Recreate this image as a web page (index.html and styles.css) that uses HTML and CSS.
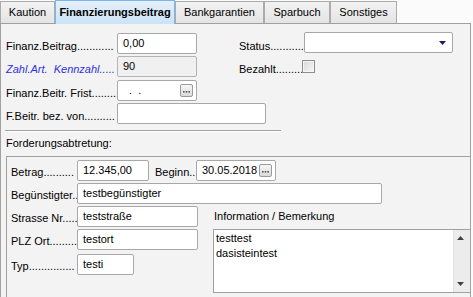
FILE: index.html
```html
<!DOCTYPE html>
<html>
<head>
<meta charset="utf-8">
<link rel="stylesheet" href="styles.css">
</head>
<body>
<div class="tabs">
  <div class="tab w1">Kaution</div>
  <div class="tab active w2">Finanzierungsbeitrag</div>
  <div class="tab w3">Bankgarantien</div>
  <div class="tab w4">Sparbuch</div>
  <div class="tab w5">Sonstiges</div>
</div>
<div class="panel">
  <div class="top">
    <div class="lbl">Finanz.Beitrag............</div>
    <div class="inp w80"><span>0,00</span></div>
    <div class="lbl">Status...........</div>
    <div class="sel"><svg width="7" height="4" viewBox="0 0 7 4"><path d="M0 0H7L3.5 4Z" fill="#1c1c5e"/></svg></div>

    <div class="lbl blue">Zahl.Art.&nbsp; Kennzahl.....</div>
    <div class="inp w80 dis"><span>90</span></div>
    <div class="chkrow"><span class="lbl">Bezahlt.........</span><span class="chk"></span></div>

    <div class="lbl">Finanz.Beitr. Frist.........</div>
    <div class="inp w80 date"><span>&nbsp;&nbsp;.&nbsp;&nbsp;.</span><span class="btn"><svg width="7" height="2" viewBox="0 0 7 2"><rect x="0" y="0" width="1.6" height="1.6" fill="#555"/><rect x="2.7" y="0" width="1.6" height="1.6" fill="#555"/><rect x="5.4" y="0" width="1.6" height="1.6" fill="#555"/></svg></span></div>

    <div class="lbl first">F.Beitr. bez. von..........</div>
    <div class="inp wide"></div>
  </div>
  <div class="sep"></div>
  <div class="caption">Forderungsabtretung:</div>
  <div class="group">
    <div class="grow">
      <div class="glbl">Betrag..........</div>
      <div class="inp w72"><span>12.345,00</span></div>
      <div class="glbl beg">Beginn..</div>
      <div class="inp w80 date"><span>30.05.2018</span><span class="btn"><svg width="7" height="2" viewBox="0 0 7 2"><rect x="0" y="0" width="1.6" height="1.6" fill="#555"/><rect x="2.7" y="0" width="1.6" height="1.6" fill="#555"/><rect x="5.4" y="0" width="1.6" height="1.6" fill="#555"/></svg></span></div>
    </div>
    <div class="grow">
      <div class="glbl">Begünstigter..</div>
      <div class="inp w305"><span>testbegünstigter</span></div>
    </div>
    <div class="split">
      <div class="left">
        <div class="grow">
          <div class="glbl">Strasse Nr.....</div>
          <div class="inp w121"><span>teststraße</span></div>
        </div>
        <div class="grow">
          <div class="glbl">PLZ Ort.........</div>
          <div class="inp w121"><span>testort</span></div>
        </div>
        <div class="grow typ">
          <div class="glbl">Typ...............</div>
          <div class="inp w57"><span>testi</span></div>
        </div>
      </div>
      <div class="right">
        <div class="infolbl">Information / Bemerkung</div>
        <div class="ta">
          <div class="ta-text">testtest<br>dasisteintest</div>
          <div class="ta-scroll">
            <svg width="7" height="4" viewBox="0 0 7 4"><path d="M0 4H7L3.5 0Z" fill="#404040"/></svg>
            <svg width="7" height="4" viewBox="0 0 7 4"><path d="M0 0H7L3.5 4Z" fill="#404040"/></svg>
          </div>
        </div>
      </div>
    </div>
  </div>
</div>
</body>
</html>
```
FILE: styles.css
```css
* { box-sizing: border-box; }
html, body { margin: 0; padding: 0; }
body {
  width: 473px;
  height: 297px;
  overflow: hidden;
  background: #fbfbfb;
  font-family: "Liberation Sans", Arial, sans-serif;
  font-size: 11px;
  color: #000;
}
.tabs {
  display: flex;
  align-items: flex-end;
  height: 23px;
  position: relative;
  z-index: 1;
}
.tab {
  height: 22px;
  border: 1px solid #acacac;
  border-bottom: none;
  background: linear-gradient(#f2f2f2, #e4e4e4);
  text-align: center;
  line-height: 21px;
  white-space: nowrap;
}
.tab.active {
  height: 24px;
  margin-bottom: -1px;
  border-color: #7eb4ea;
  background: linear-gradient(#e4f0fb, #cbe2f7);
  font-weight: bold;
  line-height: 22px;
}
.w1 { width: 55px; }
.w2 { width: 120px; }
.w3 { width: 89px; }
.w4 { width: 66px; }
.w5 { width: 67px; }

.panel {
  width: 471px;
  height: 274px;
  border: 1px solid #a0a0a0;
  border-bottom: none;
  background: #f3f3f3;
  overflow: hidden;
  display: flex;
  flex-direction: column;
}
.top {
  display: grid;
  grid-template-columns: 111px 122px 65px 149px;
  grid-auto-rows: 21px;
  row-gap: 2.33px;
  padding: 9px 0 0 5px;
}
.lbl {
  white-space: nowrap;
  line-height: 21px;
  padding-top: 3px;
}
.lbl.first { grid-column: 1; }
.blue { color: #2f2fe6; font-style: italic; }
.inp {
  height: 21px;
  background: #fff;
  border: 1px solid #a8a8a8;
  border-radius: 2px;
  line-height: 19px;
  padding-left: 5px;
  white-space: nowrap;
  overflow: hidden;
}
.inp.dis { background: #f0f0f0; border-color: #b4b4b4; }
.w80 { width: 80px; }
.w72 { width: 72px; }
.w305 { width: 305px; }
.w121 { width: 121px; }
.w57 { width: 57px; }
.wide { grid-column: 2 / span 2; width: 149px; }
.date {
  display: flex;
  justify-content: space-between;
  align-items: center;
  padding-right: 3px;
}
.btn {
  width: 13px;
  height: 13px;
  border: 1px solid #9a9a9a;
  border-radius: 2px;
  background: linear-gradient(#f6f6f6, #dadada);
  display: flex;
  align-items: flex-end;
  justify-content: center;
  padding-bottom: 3px;
}
.btn svg { display: block; }
.sel {
  height: 21px;
  margin-top: -1px;
  background: #fff;
  border: 1px solid #a8a8a8;
  border-radius: 2px;
  display: flex;
  align-items: center;
  justify-content: flex-end;
  padding-right: 6px;
}
.sel svg { display: block; }
.chkrow {
  grid-column: 3 / span 2;
  display: flex;
  align-items: center;
}
.chkrow .lbl { display: block; height: 21px; }
.chk {
  width: 13px;
  height: 13px;
  margin-left: -1px;
  border: 1px solid #8e8e8e;
  background: linear-gradient(135deg, #d8d8d8, #f7f7f7);
  box-shadow: inset 0 0 0 1px #f4f4f4;
}
.sep {
  margin: 6px 0 0 4px;
  width: 276px;
  height: 2px;
  border-top: 1px solid #a0a0a0;
  border-bottom: 1px solid #ffffff;
}
.caption {
  margin-top: 4px;
  padding-left: 5px;
  line-height: 14px;
}
.group {
  margin: 6px 0 0 5px;
  flex: 1;
  border: 1px solid #a0a0a0;
  border-right: none;
  border-bottom: none;
  padding: 3px 0 0 4px;
  display: flex;
  flex-direction: column;
  gap: 2px;
  overflow: hidden;
}
.grow {
  display: flex;
  height: 21px;
}
.glbl {
  width: 66px;
  flex-shrink: 0;
  white-space: nowrap;
  line-height: 21px;
  padding-top: 2px;
}
.glbl.beg { width: 41px; margin-left: 6px; }
.grow .inp { flex-shrink: 0; }
.split { display: flex; }
.left {
  width: 187px;
  flex-shrink: 0;
  display: flex;
  flex-direction: column;
  gap: 2px;
}
.typ { margin-top: 2px; }
.right {
  margin-left: 15px;
  display: flex;
  flex-direction: column;
}
.infolbl {
  height: 21px;
  line-height: 21px;
  padding-left: 1px;
}
.ta {
  margin-top: 2px;
  width: 258px;
  height: 64px;
  background: #fff;
  border: 1px solid #a0a0a0;
  display: flex;
}
.ta-text {
  flex: 1;
  padding: 1px 2px;
  line-height: 15px;
}
.ta-scroll {
  width: 17px;
  background: #ececec;
  border-left: 1px solid #e2e2e2;
  display: flex;
  flex-direction: column;
  justify-content: space-between;
  align-items: center;
  padding: 6px 3px 6px 0;
}
.ta-scroll svg { display: block; }
```
